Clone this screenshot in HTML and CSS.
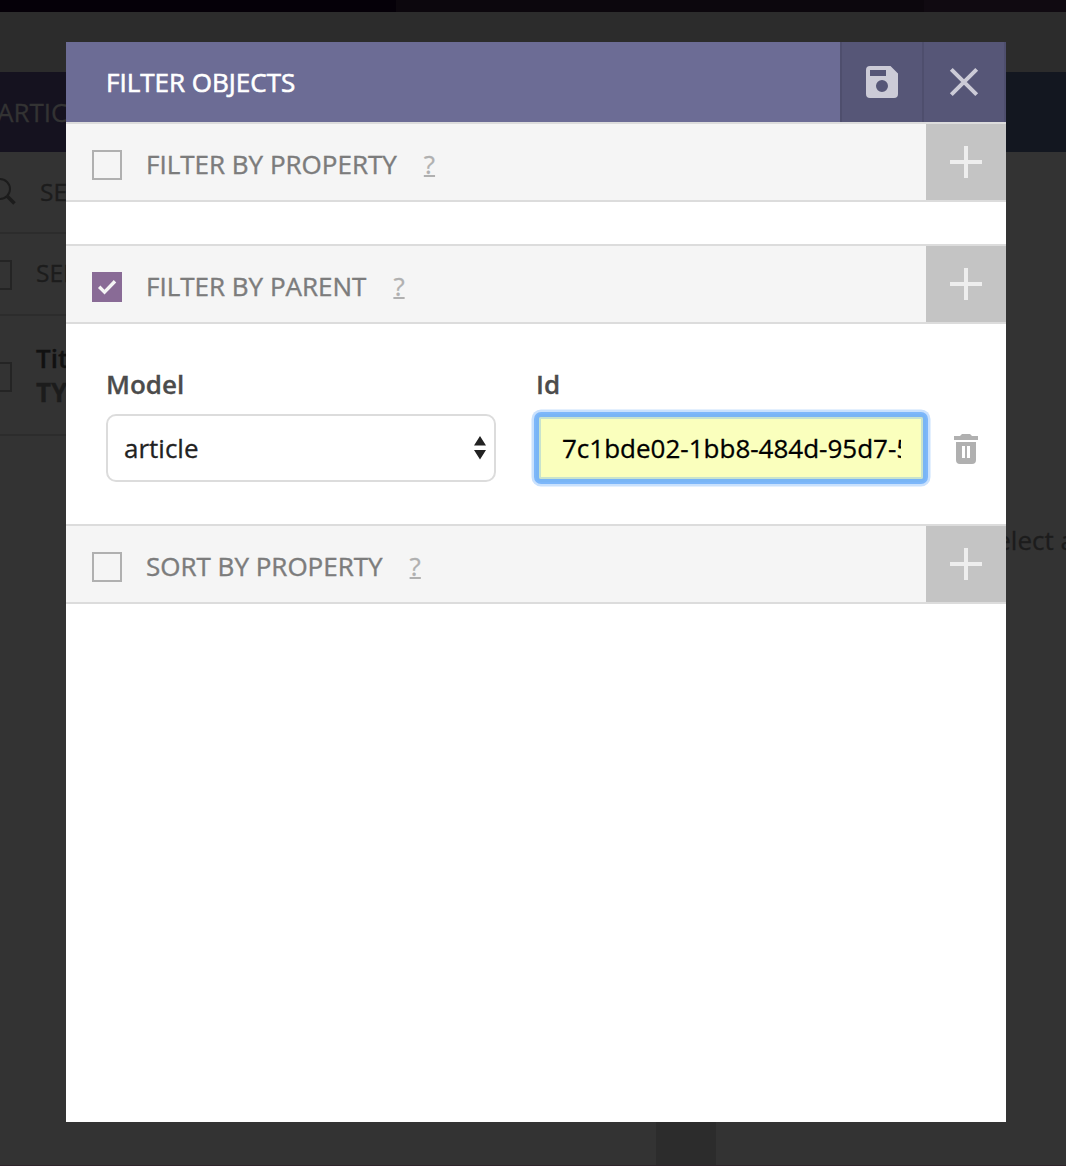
FILE: index.html
```html
<!DOCTYPE html>
<html lang="en">
<head>
<meta charset="utf-8">
<title>Filter objects</title>
<link rel="stylesheet" href="styles.css">
</head>
<body>
<div class="page">
  <div class="topbar"><span class="tab-a"></span><span class="tab-b"></span><span class="tab-c"></span></div>
  <div class="panels">
    <section class="list">
      <header class="list-head">ARTICLES</header>
      <div class="row search">
        <svg class="lens" width="20" height="34" viewBox="0 0 20 34"><circle cx="0" cy="14" r="10" fill="none" stroke="#1c1c1c" stroke-width="2"/><path d="M7 21l7.500 7.500" stroke="#1c1c1c" stroke-width="3.500"/></svg>
        <span class="search-text">SEARCH</span>
      </div>
      <div class="row select"><span class="box"></span><span class="select-text">SELECT ALL</span></div>
      <div class="row item"><span class="box"></span><span class="item-text">Title<br><span class="type">TYPE</span></span></div>
    </section>
    <section class="detail">
      <header class="detail-head"></header>
      <p class="hint">Select an object</p>
    </section>
  </div>
  <div class="bottom"></div>
</div>

<div class="modal">
  <header class="modal-head">
    <h1 class="title">FILTER OBJECTS</h1>
    <button class="action"><svg width="32" height="32" viewBox="0 0 32 32"><path fill="#cccbd7" fill-rule="evenodd" d="M4 0h20.500L32 7.500V28a4 4 0 0 1-4 4H4a4 4 0 0 1-4-4V4a4 4 0 0 1 4-4zM4 4v6h16V4zM16 14a6 6 0 1 0 0 12 6 6 0 0 0 0-12z"/></svg></button>
    <button class="action"><svg width="32" height="32" viewBox="0 0 32 32"><path stroke="#cccbd7" stroke-width="4" d="M3.300 3.300l25.400 25.400M28.700 3.300L3.300 28.700"/></svg></button>
  </header>

  <div class="section">
    <span class="check"></span><span class="name">FILTER BY PROPERTY</span><a class="help">?</a>
    <button class="add"><svg width="32" height="32" viewBox="0 0 32 32"><path fill="#eee" d="M14 0h4v14h14v4H18v14h-4V18H0v-4h14z"/></svg></button>
  </div>
  <div class="spacer"></div>
  <div class="section">
    <span class="check checked"><svg width="30" height="30" viewBox="0 0 30 30"><path fill="none" stroke="#f5f5f5" stroke-width="3.400" d="M7.200 14.800l5.300 5.300L23 9.200"/></svg></span><span class="name">FILTER BY PARENT</span><a class="help">?</a>
    <button class="add"><svg width="32" height="32" viewBox="0 0 32 32"><path fill="#eee" d="M14 0h4v14h14v4H18v14h-4V18H0v-4h14z"/></svg></button>
  </div>
  <div class="fields">
    <div class="field">
      <div class="label">Model</div>
      <div class="select-box"><span>article</span><svg width="12" height="24" viewBox="0 0 12 24"><path fill="#222" d="M6 0l6 9.500H0zM0 14h12L6 23.500z"/></svg></div>
    </div>
    <div class="field">
      <div class="label">Id</div>
      <div class="input-box"><span class="value">7c1bde02-1bb8-484d-95d7-5</span></div>
    </div>
    <svg class="trash" width="24" height="30" viewBox="0 0 24 30"><path fill="#b0b0b0" fill-rule="evenodd" d="M0 2h6l2-2h8l2 2h6v4H0zM2 8h20v18a4 4 0 0 1-4 4H6a4 4 0 0 1-4-4zM8 12v12h3V12zM13 12v12h3V12z"/></svg>
  </div>
  <div class="section">
    <span class="check"></span><span class="name">SORT BY PROPERTY</span><a class="help">?</a>
    <button class="add"><svg width="32" height="32" viewBox="0 0 32 32"><path fill="#eee" d="M14 0h4v14h14v4H18v14h-4V18H0v-4h14z"/></svg></button>
  </div>
</div>
</body>
</html>
```

FILE: styles.css
```css
* { box-sizing: border-box; }
body {
  margin: 0;
  font: 26px/36px "Open Sans", sans-serif;
  background: #2c2c2c;
  -webkit-text-stroke: 0.3px;
}
button { border: 0; padding: 0; font: inherit; }
svg { display: block; flex: none; }

.page { height: 1166px; display: flex; flex-direction: column; overflow: hidden; }
.topbar { display: flex; height: 12px; flex: none; }
.tab-a { width: 396px; background: #050008; }
.tab-b { width: 528px; background: #0c070d; }
.tab-c { flex: 1; background: #100a11; }
.panels { flex: 1; display: flex; gap: 60px; padding-top: 60px; }
.bottom { height: 1px; background: #2f242b; }

.list { width: 656px; background: #333; color: #1c1c1c; white-space: nowrap; }
.list-head { height: 80px; background: #15121f; color: #333; line-height: 80px; text-indent: -3px; }
.row { display: flex; border-bottom: 2px solid #2c2c2c; }
.search { height: 82px; align-items: center; }
.lens { margin-right: 20px; }
.search-text { font-size: 24.5px; }
.select { height: 82px; align-items: center; }
.box { width: 30px; height: 30px; flex: none; margin: 2px 24px 0 -18px; border: 2px solid #242424; }
.select-text { font-size: 24.5px; margin-bottom: 2px; }
.item { height: 120px; align-items: center; }
.item .box { margin-top: 4px; }
.item-text { font-weight: 600; line-height: 34px; color: #111; }
.type { font-weight: 700; color: #1c1c1c; }

.detail { flex: 1; background: #333; color: #1c1c1c; overflow: hidden; }
.detail-head { height: 80px; background: #131720; }
.hint { margin: 370px 0 0 266px; white-space: nowrap; }

.modal {
  position: absolute;
  left: 66px;
  top: 42px;
  width: 940px;
  height: 1080px;
  background: #fff;
}
.modal-head { display: flex; height: 80px; background: #6c6c95; }
.title { flex: 1; margin: 0; padding-left: 40px; color: #fff; font-size: 26px; font-weight: 400; line-height: 80px; -webkit-text-stroke: 0.6px; }
.action { display: flex; width: 82px; align-items: center; justify-content: center; background: #565677; border-left: 2px solid #4e4e6d; }
.action:last-child { width: 84px; border-right: 2px solid #4e4e6d; }

.section {
  display: flex;
  align-items: center;
  height: 80px;
  padding-left: 26px;
  background: #f5f5f5;
  border-top: 2px solid #dcdcdc;
  border-bottom: 2px solid #dcdcdc;
}
.check { width: 30px; height: 30px; margin: 6px 24px 0 0; border: 2px solid #b0b0b0; }
.checked { border: 0; background: #896b96; }
.name { color: #7c7c7c; margin-top: 4px; -webkit-text-stroke: 0.4px; }
.help { margin: 4px 0 0 27px; color: #b0b0b0; text-decoration: underline; text-decoration-thickness: 2px; }
.add { display: flex; align-items: center; justify-content: center; width: 80px; height: 76px; margin-left: auto; background: #c4c4c4; }
.spacer { height: 42px; }

.fields { display: flex; gap: 40px; height: 200px; padding: 42px 28px 40px 40px; }
.field { width: 390px; }
.label { height: 48px; line-height: 37px; font-weight: 600; color: #4c4c4c; }
.select-box, .input-box { display: flex; align-items: center; height: 68px; border-radius: 10px; }
.select-box { justify-content: space-between; padding: 0 8px 0 16px; border: 2px solid #dcdcdc; color: #222; }
.input-box {
  padding: 0 21px 0 23px;
  color: #000;
  background: #faffbd;
  border: 3px solid #79b5f5;
  border-radius: 5px;
  box-shadow: 0 0 0 2px #7db7fa, 0 0 0 4.500px #c9e1fd, inset 0 0 0 2px #c8e3cd;
}
.value { width: 339px; overflow: hidden; white-space: nowrap; }
.trash { margin: 68px 0 0 -12px; }
```
